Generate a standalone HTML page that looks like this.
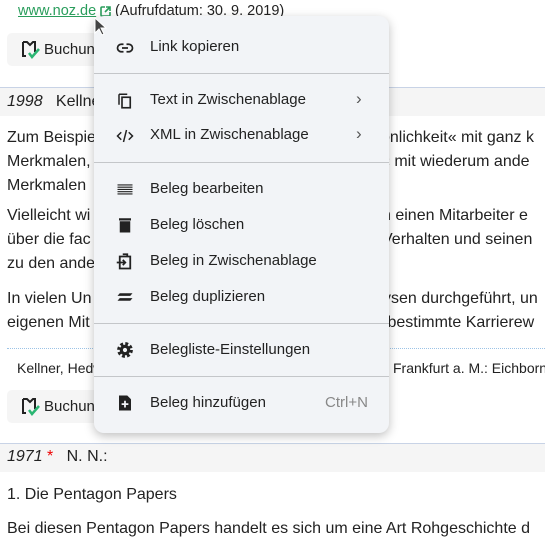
<!DOCTYPE html>
<html><head><meta charset="utf-8"><style>
*{margin:0;padding:0;box-sizing:border-box}
body{width:545px;height:531px;overflow:hidden;background:#fff;font-family:"Liberation Sans","DejaVu Sans",sans-serif;color:#222;position:relative}
.a{position:absolute;white-space:nowrap}
.p{font-size:16px;line-height:24px}
.band{position:absolute;left:0;width:545px;height:29px;background:#f5f5f5;border-top:1px solid #c8d3e6}
.btn{position:absolute;left:7px;width:100px;height:33px;background:#f5f5f5;border-radius:5px}
.menu{position:absolute;left:94px;top:16px;width:295px;height:417px;background:#f2f4f7;border-radius:10px;box-shadow:0 3px 10px rgba(0,0,0,.25)}
.it{position:absolute;left:56px;font-size:15px;color:#222;white-space:nowrap}
.ic{position:absolute;left:22px;width:18px;height:18px}
.sep{position:absolute;left:0;width:295px;height:1px;background:#c4c6c9}
.chev{position:absolute;left:262px;font-size:17px;color:#555}
</style></head><body>
<div class="a" style="left:18px;top:3px;font-size:14.5px;color:#2a9d5c;text-decoration:underline">www.noz.de</div>
<svg class="a" style="left:100px;top:6px" width="11" height="11" viewBox="0 0 11 11"><path d="M5 1H2a1 1 0 0 0-1 1v7a1 1 0 0 0 1 1h7a1 1 0 0 0 1-1V6M6 1h4v4M10 1 5 6" fill="none" stroke="#2a9d5c" stroke-width="1.6"/></svg>
<div class="a" style="left:115px;top:3px;font-size:14.5px">(Aufrufdatum: 30. 9. 2019)</div>
<div class="btn" style="top:33px"></div>
<svg class="a" style="left:20px;top:40px" width="22" height="20" viewBox="0 0 22 20"><path d="M3 2h4l3 3 3-3h2v10M3 2v14h3" fill="none" stroke="#222" stroke-width="2"/><path d="M9 13l3 4 7-8" fill="none" stroke="#2bb673" stroke-width="2.5"/></svg>
<div class="a" style="left:44px;top:41px;font-size:15px">Buchung</div>
<div class="band" style="top:87px"></div>
<div class="a" style="left:7px;top:93px;font-size:16px"><i>1998</i>&nbsp;&nbsp; Kellner</div>
<div class="a p" style="left:7px;top:126px">Zum Beispiel<br>Merkmalen,<br>Merkmalen</div>
<div class="a p" style="left:381px;top:126px">önlichkeit« mit ganz k<br>« mit wiederum ande</div>
<div class="a p" style="left:7px;top:204px">Vielleicht wi<br>über die fac<br>zu den ande</div>
<div class="a p" style="left:382px;top:204px">h einen Mitarbeiter e<br>Verhalten und seinen</div>
<div class="a p" style="left:7px;top:287px">In vielen Un<br>eigenen Mit</div>
<div class="a p" style="left:383px;top:287px">ysen durchgeführt, un<br>&nbsp;bestimmte Karrierew</div>
<div class="a" style="left:7px;top:348px;width:538px;border-top:1px dotted #9cc3e6"></div>
<div class="a" style="left:17px;top:360px;font-size:14px">Kellner, Hedwig</div>
<div class="a" style="left:393px;top:360px;font-size:14px">Frankfurt a. M.: Eichborn</div>
<div class="btn" style="top:390px"></div>
<svg class="a" style="left:20px;top:397px" width="22" height="20" viewBox="0 0 22 20"><path d="M3 2h4l3 3 3-3h2v10M3 2v14h3" fill="none" stroke="#222" stroke-width="2"/><path d="M9 13l3 4 7-8" fill="none" stroke="#2bb673" stroke-width="2.5"/></svg>
<div class="a" style="left:44px;top:398px;font-size:15px">Buchung</div>
<div class="band" style="top:443px"></div>
<div class="a" style="left:7px;top:448px;font-size:16px"><i>1971</i> <span style="color:#e00">*</span>&nbsp;&nbsp; N. N.:</div>
<div class="a p" style="left:7px;top:483px">1. Die Pentagon Papers</div>
<div class="a p" style="left:7px;top:517px">Bei diesen Pentagon Papers handelt es sich um eine Art Rohgeschichte d</div>

<div class="menu">
<svg class="ic" style="top:23px" viewBox="0 0 24 24"><path d="M10 7H7a5 5 0 0 0 0 10h3M14 7h3a5 5 0 0 1 0 10h-3M8 12h8" fill="none" stroke="#222" stroke-width="2.3"/></svg>
<div class="it" style="top:22px">Link kopieren</div>
<div class="sep" style="top:57px"></div>
<svg class="ic" style="top:76px" viewBox="0 0 24 24"><path d="M4 3v14M4 3h11" fill="none" stroke="#222" stroke-width="2"/><rect x="8" y="7" width="11" height="14" fill="none" stroke="#222" stroke-width="2.2"/></svg>
<div class="it" style="top:75px">Text in Zwischenablage</div><div class="chev" style="top:73px">›</div>
<svg class="ic" style="top:111px" viewBox="0 0 24 24"><path d="M7 7l-5 5 5 5M17 7l5 5-5 5M14 4l-4 16" fill="none" stroke="#222" stroke-width="2"/></svg>
<div class="it" style="top:110px">XML in Zwischenablage</div><div class="chev" style="top:108px">›</div>
<div class="sep" style="top:146px"></div>
<svg class="ic" style="top:164px" viewBox="0 0 24 24"><path d="M2 6.5h20M2 9.5h20M2 12.5h20M2 15.5h20M2 18.5h20" stroke="#222" stroke-width="1.5"/></svg>
<div class="it" style="top:164px">Beleg bearbeiten</div>
<svg class="ic" style="top:200px" viewBox="0 0 24 24"><path d="M4 3h16v3H4zM5 7h14v15H5z" fill="#222"/></svg>
<div class="it" style="top:200px">Beleg löschen</div>
<svg class="ic" style="top:236px" viewBox="0 0 24 24"><path d="M9 3h6v3H5v16h14V6h-4" fill="none" stroke="#222" stroke-width="2.4"/><path d="M1 14h11M9 10.5l3.5 3.5-3.5 3.5" fill="none" stroke="#222" stroke-width="2.2"/></svg>
<div class="it" style="top:236px">Beleg in Zwischenablage</div>
<svg class="ic" style="top:272px" viewBox="0 0 24 24"><path d="M5 7h17l-3 3.5H2zM5 13.5h17L19 17H2z" fill="#222"/></svg>
<div class="it" style="top:272px">Beleg duplizieren</div>
<div class="sep" style="top:307px"></div>
<svg class="ic" style="top:325px" viewBox="0 0 24 24"><circle cx="12" cy="12" r="8" fill="none" stroke="#222" stroke-width="5" stroke-dasharray="3.6 2.7"/><circle cx="12" cy="12" r="7" fill="#222"/><circle cx="12" cy="12" r="2.8" fill="#f2f4f7"/></svg>
<div class="it" style="top:325px">Belegliste-Einstellungen</div>
<div class="sep" style="top:360px"></div>
<svg class="ic" style="top:378px" viewBox="0 0 24 24"><path d="M4 2h11l5 5v15H4z" fill="#222"/><path d="M12 9v9M7.5 13.5h9" stroke="#f2f4f7" stroke-width="2.4"/></svg>
<div class="it" style="top:378px">Beleg hinzufügen</div>
<div class="it" style="top:378px;left:231px;color:#888">Ctrl+N</div>
</div>
<svg class="a" style="left:94px;top:17px" width="14" height="22" viewBox="0 0 14 22"><path d="M1 1v15l4-4 3 6 2-1-3-6h5z" fill="#444" stroke="#fff" stroke-width="1"/></svg>
</body></html>
